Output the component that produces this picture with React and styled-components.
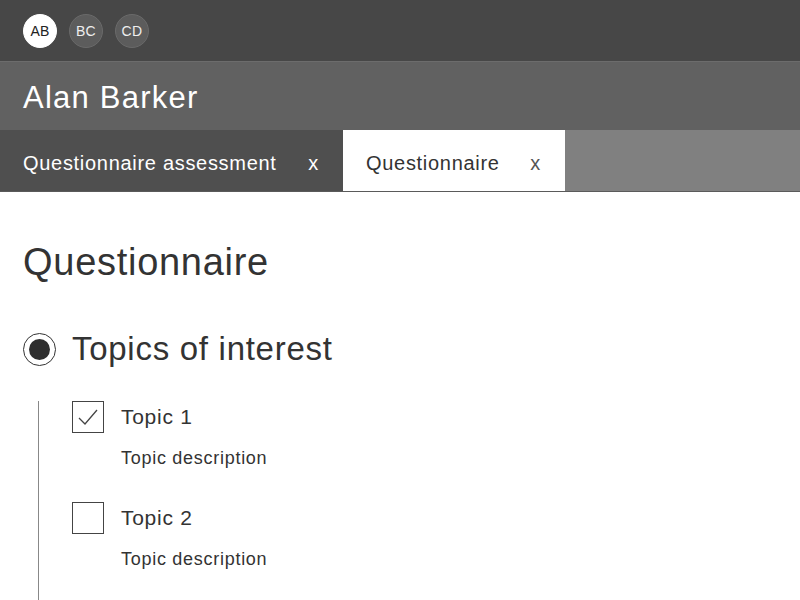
import React from 'react'
import styled, { createGlobalStyle } from 'styled-components'

const GlobalStyle = createGlobalStyle`
  html, body {
    margin: 0;
    padding: 0;
    background: #fff;
    font-family: 'Liberation Sans', Arial, sans-serif;
  }
`

const Page = styled.div`
  width: 800px;
  height: 600px;
  overflow: hidden;
  background: #fff;
  letter-spacing: 0.045em;
`

const TopBar = styled.div`
  display: flex;
  align-items: center;
  gap: 12px;
  height: 61px;
  padding-left: 23px;
  background: #474747;
  box-sizing: border-box;
`

const Avatar = styled.div`
  width: 34px;
  height: 34px;
  border-radius: 50%;
  display: flex;
  align-items: center;
  justify-content: center;
  font-size: 14px;
  letter-spacing: 0.02em;
  background: ${(p) => (p.active ? '#fff' : '#5c5c5c')};
  color: ${(p) => (p.active ? '#222' : '#eee')};
  border: 1px solid ${(p) => (p.active ? '#fff' : '#6a6a6a')};
  box-sizing: border-box;
`

const NameBar = styled.div`
  height: 69px;
  display: flex;
  align-items: center;
  padding: 4px 0 0 23px;
  background: #616161;
  color: #fff;
  font-size: 31px;
  letter-spacing: 0.04em;
  border-top: 1px solid #6c6c6c;
  box-sizing: border-box;
`

const TabBar = styled.div`
  display: flex;
  height: 62px;
  background: #808080;
  border-bottom: 1px solid #5a5a5a;
  box-sizing: border-box;
`

const Tab = styled.div`
  display: flex;
  align-items: center;
  justify-content: space-between;
  width: ${(p) => p.width}px;
  padding: 6px 24px 0 23px;
  box-sizing: border-box;
  font-size: 20px;
  letter-spacing: 0.035em;
  background: ${(p) => (p.active ? '#fff' : '#4f4f4f')};
  color: ${(p) => (p.active ? '#333' : '#fff')};
`

const Close = styled.span`
  font-size: 20px;
  color: ${(p) => (p.active ? '#555' : '#fff')};
`

const Content = styled.div`
  padding: 0 23px;
  color: #333;
`

const Title = styled.h1`
  margin: 0;
  padding-top: 49px;
  font-size: 38px;
  font-weight: normal;
  line-height: 42px;
`

const Section = styled.div`
  display: flex;
  align-items: center;
  gap: 16px;
  margin-top: 48px;
  font-size: 33px;
  line-height: 36px;
`

const Radio = styled.span`
  width: 33px;
  height: 33px;
  border-radius: 50%;
  border: 1.5px solid #333;
  box-sizing: border-box;
  display: flex;
  align-items: center;
  justify-content: center;

  &::after {
    content: '';
    width: 21px;
    height: 21px;
    border-radius: 50%;
    background: #2e2e2e;
  }
`

const TopicList = styled.div`
  margin-top: 34px;
  margin-left: 15px;
  padding-left: 33px;
  border-left: 1.5px solid #888;
  height: 200px;
`

const Topic = styled.div`
  margin-bottom: 33px;
`

const TopicRow = styled.div`
  display: flex;
  align-items: center;
  gap: 17px;
  font-size: 21px;
`

const Box = styled.span`
  width: 32px;
  height: 32px;
  border: 1.5px solid #444;
  box-sizing: border-box;
  display: flex;
  align-items: center;
  justify-content: center;
`

const Desc = styled.div`
  margin-top: 15px;
  margin-left: 49px;
  font-size: 18px;
  color: #333;
`

const topics = [
  { name: 'Topic 1', checked: true },
  { name: 'Topic 2', checked: false },
]

export default function App() {
  return (
    <Page>
      <GlobalStyle />
      <TopBar>
        <Avatar active>AB</Avatar>
        <Avatar>BC</Avatar>
        <Avatar>CD</Avatar>
      </TopBar>
      <NameBar>Alan Barker</NameBar>
      <TabBar>
        <Tab width={343}>
          Questionnaire assessment
          <Close>x</Close>
        </Tab>
        <Tab width={222} active>
          Questionnaire
          <Close active>x</Close>
        </Tab>
      </TabBar>
      <Content>
        <Title>Questionnaire</Title>
        <Section>
          <Radio />
          Topics of interest
        </Section>
        <TopicList>
          {topics.map((t) => (
            <Topic key={t.name}>
              <TopicRow>
                <Box>
                  {t.checked && (
                    <svg width="22" height="18" viewBox="0 0 22 18">
                      <path d="M2 10 L8 16 L20 2" fill="none" stroke="#444" strokeWidth="1.3" />
                    </svg>
                  )}
                </Box>
                {t.name}
              </TopicRow>
              <Desc>Topic description</Desc>
            </Topic>
          ))}
        </TopicList>
      </Content>
    </Page>
  )
}
